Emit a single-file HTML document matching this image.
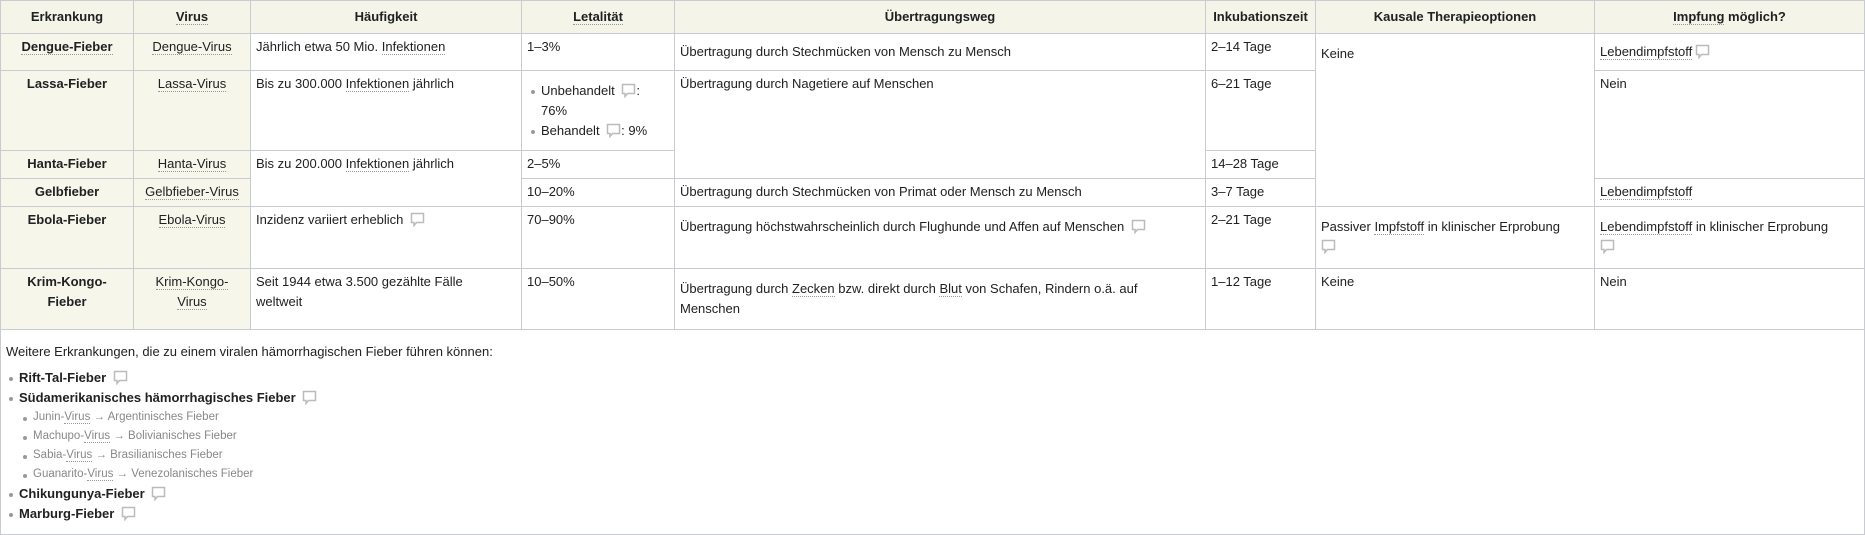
<!DOCTYPE html>
<html><head><meta charset="utf-8"><style>
body{margin:0;background:#fff;font-family:"Liberation Sans",sans-serif;font-size:13px;color:#202122;}
table{border-collapse:collapse;width:1864px;table-layout:fixed;}
td,th{border:1px solid #c8ccd1;padding:3px 5px;vertical-align:top;line-height:20px;}
th{background:#f4f4e8;font-weight:bold;text-align:center;height:26px;vertical-align:middle;}
td.e{background:#f6f6ea;text-align:center;font-weight:bold;}
td.v{background:#f6f6ea;text-align:center;}
td.m{vertical-align:middle;}
u{text-decoration:none;border-bottom:1px dotted #999;}
.c{display:inline-block;width:15px;height:15px;vertical-align:-3px;margin-left:3px;}
ul{margin:0;padding-left:14px;}
li{list-style:none;position:relative;}
li:before{content:"";position:absolute;left:-10px;top:9px;width:4px;height:4px;border-radius:2px;background:#999;}
.g{color:#888;font-size:11.5px;line-height:19px;}
</style></head><body>
<svg width="0" height="0" style="position:absolute"><defs><symbol id="b" viewBox="0 0 15 15"><path d="M1.5 1.5h12v9h-7l-2.5 3v-3h-2.5z" fill="none" stroke="#bbb" stroke-width="1.5"/></symbol></defs></svg>
<table>
<colgroup><col style="width:133px"><col style="width:117px"><col style="width:271px"><col style="width:153px"><col style="width:531px"><col style="width:110px"><col style="width:279px"><col style="width:270px"></colgroup>
<tr><th>Erkrankung</th><th><u>Virus</u></th><th>Häufigkeit</th><th><u>Letalität</u></th><th>Übertragungsweg</th><th>Inkubationszeit</th><th>Kausale Therapieoptionen</th><th><u>Impfung</u> möglich?</th></tr>
<tr style="height:37px"><td class="e"><u>Dengue-Fieber</u></td><td class="v"><u>Dengue-Virus</u></td><td>Jährlich etwa 50 Mio. <u>Infektionen</u></td><td>1–3%</td><td class="m">Übertragung durch Stechmücken von Mensch zu Mensch</td><td>2–14 Tage</td><td rowspan="4" style="padding-top:10px">Keine</td><td class="m"><u>Lebendimpfstoff</u><svg class="c"><use href="#b"/></svg></td></tr>
<tr style="height:80px"><td class="e">Lassa-Fieber</td><td class="v"><u>Lassa-Virus</u></td><td>Bis zu 300.000 <u>Infektionen</u> jährlich</td><td style="padding-top:10px"><ul><li>Unbehandelt <svg class="c"><use href="#b"/></svg>:<br>76%</li><li>Behandelt <svg class="c"><use href="#b"/></svg>: 9%</li></ul></td><td rowspan="2">Übertragung durch Nagetiere auf Menschen</td><td>6–21 Tage</td><td rowspan="2">Nein</td></tr>
<tr style="height:28px"><td class="e">Hanta-Fieber</td><td class="v"><u>Hanta-Virus</u></td><td rowspan="2">Bis zu 200.000 <u>Infektionen</u> jährlich</td><td>2–5%</td><td>14–28 Tage</td></tr>
<tr style="height:28px"><td class="e">Gelbfieber</td><td class="v"><u>Gelbfieber-Virus</u></td><td>10–20%</td><td>Übertragung durch Stechmücken von Primat oder Mensch zu Mensch</td><td>3–7 Tage</td><td><u>Lebendimpfstoff</u></td></tr>
<tr style="height:62px"><td class="e">Ebola-Fieber</td><td class="v"><u>Ebola-Virus</u></td><td>Inzidenz variiert erheblich <svg class="c"><use href="#b"/></svg></td><td>70–90%</td><td style="padding-top:10px">Übertragung höchstwahrscheinlich durch Flughunde und Affen auf Menschen <svg class="c"><use href="#b"/></svg></td><td>2–21 Tage</td><td style="padding-top:10px">Passiver <u>Impfstoff</u> in klinischer Erprobung<br><svg class="c" style="margin-left:0"><use href="#b"/></svg></td><td style="padding-top:10px"><u>Lebendimpfstoff</u> in klinischer Erprobung<br><svg class="c" style="margin-left:0"><use href="#b"/></svg></td></tr>
<tr style="height:61px"><td class="e">Krim-Kongo-<br>Fieber</td><td class="v"><u>Krim-Kongo-<br>Virus</u></td><td>Seit 1944 etwa 3.500 gezählte Fälle<br>weltweit</td><td>10–50%</td><td style="padding-top:10px">Übertragung durch <u>Zecken</u> bzw. direkt durch <u>Blut</u> von Schafen, Rindern o.ä. auf Menschen</td><td>1–12 Tage</td><td>Keine</td><td>Nein</td></tr>
<tr><td colspan="8" style="padding:12px 5px 10px;height:178px">
<div style="margin-bottom:6px">Weitere Erkrankungen, die zu einem viralen hämorrhagischen Fieber führen können:</div>
<ul style="padding-left:13px"><li><b>Rift-Tal-Fieber</b> <svg class="c"><use href="#b"/></svg></li>
<li><b>Südamerikanisches hämorrhagisches Fieber</b> <svg class="c"><use href="#b"/></svg>
<ul class="g" style="padding-left:14px"><li>Junin-<u>Virus</u> → Argentinisches Fieber</li><li>Machupo-<u>Virus</u> → Bolivianisches Fieber</li><li>Sabia-<u>Virus</u> → Brasilianisches Fieber</li><li>Guanarito-<u>Virus</u> → Venezolanisches Fieber</li></ul></li>
<li><b>Chikungunya-Fieber</b> <svg class="c"><use href="#b"/></svg></li>
<li><b>Marburg-Fieber</b> <svg class="c"><use href="#b"/></svg></li></ul>
</td></tr>
</table>
</body></html>
